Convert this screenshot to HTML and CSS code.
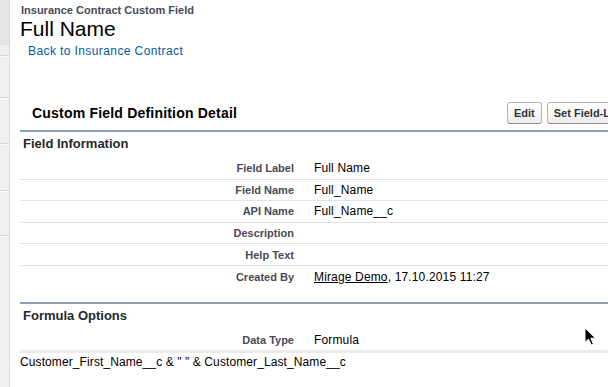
FILE: index.html
```html
<!DOCTYPE html>
<html lang="en">
<head>
    <meta charset="UTF-8">
    <title>Full Name - Custom Field</title>
    <link rel="stylesheet" href="styles.css">
</head>
<body>
    <div class="sidebar">
        <div class="side-top"></div>
        <div class="side-gap"></div>
        <div class="side-tab t1"></div>
        <div class="side-tab t2"></div>
        <div class="side-tab t3"></div>
        <div class="side-tab t4"></div>
        <div class="side-tab rest"></div>
    </div>

    <div class="main">
        <div class="breadcrumb">Insurance Contract Custom Field</div>
        <h1 class="page-title">Full Name</h1>
        <a class="back-link" href="#">Back to Insurance Contract</a>

        <div class="pb-header">
            <h2 class="pb-title">Custom Field Definition Detail</h2>
            <div class="pb-buttons">
                <button class="btn">Edit</button>
                <button class="btn">Set Field-Level Security</button>
            </div>
        </div>

        <div class="section">
            <h3 class="section-title">Field Information</h3>
            <div class="row"><div class="label">Field Label</div><div class="value">Full Name</div></div>
            <div class="row"><div class="label">Field Name</div><div class="value">Full_Name</div></div>
            <div class="row"><div class="label">API Name</div><div class="value">Full_Name__c</div></div>
            <div class="row"><div class="label">Description</div><div class="value"></div></div>
            <div class="row"><div class="label">Help Text</div><div class="value"></div></div>
            <div class="row last"><div class="label">Created By</div><div class="value"><a class="user-link" href="#">Mirage Demo</a>, 17.10.2015 11:27</div></div>
        </div>

        <div class="section formula">
            <h3 class="section-title">Formula Options</h3>
            <div class="row short last"><div class="label">Data Type</div><div class="value">Formula</div></div>
            <div class="formula-text">Customer_First_Name__c &amp; " " &amp; Customer_Last_Name__c</div>
        </div>
    </div>

    <svg class="cursor" width="13" height="20" viewBox="0 0 13 20">
        <path d="M1 1 L1 15.5 L4.5 12 L7.2 18 L9.4 17 L6.8 11.2 L11.5 11.2 Z" fill="#000" stroke="#fff" stroke-width="1"/>
    </svg>
</body>
</html>
```

FILE: styles.css
```css
body {
    margin: 0;
    height: 387px;
    display: flex;
    overflow: hidden;
    background-color: #fff;
    font-family: "Liberation Sans", Arial, sans-serif;
    color: #000;
    position: relative;
}
.sidebar {
    flex: 0 0 9px;
    background-color: #f0f0f0;
    border-right: 1px solid #dcdcdc;
    display: flex;
    flex-direction: column;
}
.side-top {
    height: 45px;
    background-color: #e5e5e5;
}
.side-gap {
    height: 10px;
}
.side-tab {
    border-top: 1px solid #d6d6d6;
    box-shadow: inset 0 1px 0 #fbfbfb;
}
.t1 { height: 41px; }
.t2 { height: 45px; }
.t3 { height: 46px; }
.t4 { height: 44px; }
.rest { flex: 1; }

.main {
    flex: 1;
    min-width: 0;
    padding-left: 10px;
}
.breadcrumb {
    margin: 4px 0 0 1px;
    font-size: 11px;
    line-height: 13px;
    font-weight: bold;
    color: #4a4a56;
}
.page-title {
    margin: 0;
    font-size: 21px;
    line-height: 24px;
    font-weight: normal;
}
.back-link {
    display: inline-block;
    margin: 2px 0 0 8px;
    font-size: 12px;
    line-height: 14px;
    letter-spacing: 0.4px;
    color: #015ba7;
    text-decoration: none;
}

.pb-header {
    display: flex;
    align-items: center;
    margin-top: 43px;
    padding-bottom: 6px;
    border-bottom: 2px solid #8d9cbb;
    white-space: nowrap;
}
.pb-title {
    flex: 0 0 487px;
    box-sizing: border-box;
    margin: 0;
    padding-left: 12px;
    font-size: 14px;
    letter-spacing: 0.2px;
    font-weight: bold;
}
.pb-buttons {
    display: flex;
    gap: 5px;
    flex-shrink: 0;
}
.btn {
    font-family: "Liberation Sans", Arial, sans-serif;
    font-size: 11px;
    font-weight: bold;
    line-height: 14px;
    color: #333;
    padding: 3px 6px;
    border: 1px solid #b5b5b5;
    border-bottom-color: #8f8f8f;
    border-radius: 3px;
    background: linear-gradient(#fff, #ececec);
}

.section-title {
    margin: 0;
    padding: 4px 0 6px 3px;
    font-size: 13px;
    line-height: 16px;
    font-weight: bold;
    color: #27282e;
}
.row {
    display: flex;
    align-items: center;
    height: 21.6px;
    box-sizing: border-box;
    border-bottom: 1px solid #e3e3e3;
}
.row.last {
    border-bottom: none;
}
.row.short {
    height: 20px;
}
.label {
    flex: 0 0 274px;
    text-align: right;
    font-size: 11px;
    font-weight: bold;
    color: #4a4a56;
}
.value {
    padding-left: 20px;
    font-size: 12px;
    letter-spacing: 0.15px;
    white-space: nowrap;
}
.user-link {
    color: #000;
    text-decoration: underline;
}

.formula {
    margin-top: 14px;
    border-top: 2px solid #8d9cbb;
}
.formula-text {
    margin-top: 0;
    padding-top: 2px;
    border-top: 3px solid #ebebeb;
    font-size: 12px;
    line-height: 14px;
    letter-spacing: 0.1px;
}

.cursor {
    position: absolute;
    left: 584px;
    top: 327px;
}
```
